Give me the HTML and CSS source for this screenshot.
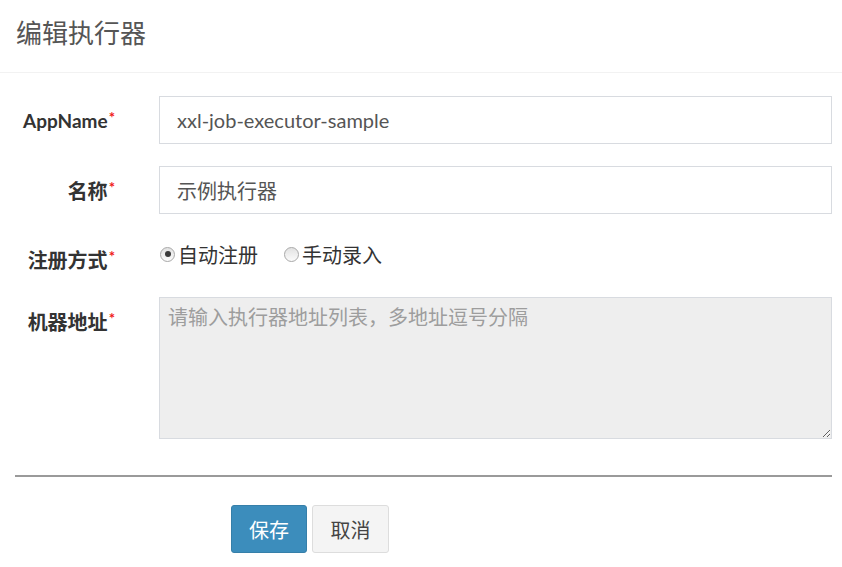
FILE: index.html
```html
<!DOCTYPE html>
<html lang="zh-CN">
<head>
<meta charset="utf-8">
<title>编辑执行器</title>
<link rel="stylesheet" href="styles.css">
</head>
<body>
<div class="modal">
  <div class="modal-header">
    <h4 class="modal-title">编辑执行器</h4>
  </div>
  <form class="modal-body">
    <div class="row">
      <label class="label"><span class="latin">AppName</span><span class="req">*</span></label>
      <input class="field" type="text" value="xxl-job-executor-sample">
    </div>
    <div class="row">
      <label class="label">名称<span class="req">*</span></label>
      <input class="field" type="text" value="示例执行器">
    </div>
    <div class="row row-radio">
      <label class="label">注册方式<span class="req">*</span></label>
      <div class="radios">
        <span class="radio"><span class="dot checked"></span>自动注册</span>
        <span class="radio"><span class="dot"></span>手动录入</span>
      </div>
    </div>
    <div class="row row-area">
      <label class="label">机器地址<span class="req">*</span></label>
      <textarea class="area" placeholder="请输入执行器地址列表，多地址逗号分隔" readonly></textarea>
    </div>
    <hr class="divider">
    <div class="actions">
      <button type="button" class="btn btn-primary">保存</button>
      <button type="button" class="btn btn-default">取消</button>
    </div>
  </form>
</div>
</body>
</html>
```
FILE: styles.css
```css
html, body {
  margin: 0;
  padding: 0;
  background: #fff;
}
body {
  font-family: Lato, "Noto Sans CJK SC", sans-serif;
  color: #333;
  width: 842px;
  height: 567px;
  overflow: hidden;
}
.modal-header {
  height: 73px;
  border-bottom: 1px solid #f2f2f2;
  box-sizing: border-box;
  padding: 17px 0 0 16px;
}
.modal-title {
  margin: 0;
  font-size: 26px;
  font-weight: normal;
  line-height: 32px;
  color: #555;
}
.modal-body {
  padding: 23px 10px 0 0;
  margin: 0;
}
.row {
  display: grid;
  grid-template-columns: 159px 673px;
  margin-bottom: 22px;
}
.label {
  display: flex;
  justify-content: flex-end;
  align-items: center;
  height: 48px;
  padding-right: 44px;
  font-size: 20px;
  font-weight: bold;
  color: #333;
  white-space: nowrap;
}
.latin {
  font-size: 19px;
}
.req {
  color: #f01818;
  font-size: 15px;
  line-height: 1;
  align-self: center;
  margin: -5px 0 0 1px;
}
.field {
  box-sizing: border-box;
  display: block;
  height: 48px;
  border: 1px solid #d8dbe0;
  padding: 0 0 0 17px;
  font-family: Lato, "Noto Sans CJK SC", sans-serif;
  font-size: 20px;
  color: #555;
  background: #fff;
  outline: none;
  margin: 0;
}
.row-radio {
  height: 39px;
}
.row-radio .label {
  height: 20px;
  padding-top: 13px;
}
.radios {
  display: flex;
  align-items: center;
  gap: 25px;
  height: 36px;
  font-size: 20px;
  color: #333;
}
.radio {
  display: flex;
  align-items: center;
}
.dot {
  box-sizing: border-box;
  width: 15px;
  height: 15px;
  border-radius: 50%;
  border: 1px solid #a8a8a8;
  background: linear-gradient(#e2e2e2, #fbfbfb);
  margin: 0 3px 0 1px;
  position: relative;
}
.dot.checked::after {
  content: "";
  position: absolute;
  left: 3.5px;
  top: 3.5px;
  width: 6px;
  height: 6px;
  border-radius: 50%;
  background: #3a3a3a;
}
.row-area .label {
  height: 20px;
  padding-top: 14px;
}
.area {
  box-sizing: border-box;
  display: block;
  height: 142px;
  width: 673px;
  background: #eee;
  border: 1px solid #d8dbe0;
  padding: 7px 8px;
  font-family: Lato, "Noto Sans CJK SC", sans-serif;
  font-size: 20px;
  line-height: 24px;
  color: #555;
  resize: both;
  outline: none;
  margin: 0;
}
.area::placeholder {
  color: #9d9d9d;
}
.divider {
  border: 0;
  border-top: 2px solid #9a9a9a;
  margin: 36px 0 0 15px;
  width: 817px;
}
.actions {
  display: flex;
  gap: 5px;
  padding: 28px 0 0 231px;
}
.btn {
  box-sizing: border-box;
  height: 48px;
  width: 76px;
  border-radius: 3px;
  font-family: Lato, "Noto Sans CJK SC", sans-serif;
  font-size: 20px;
  padding: 0;
  margin: 0;
  cursor: pointer;
}
.btn-primary {
  background: #3c8dbc;
  border: 1px solid #367fa9;
  color: #fff;
}
.btn-default {
  width: 77px;
  background: #f4f4f4;
  border: 1px solid #ddd;
  color: #444;
}
```
